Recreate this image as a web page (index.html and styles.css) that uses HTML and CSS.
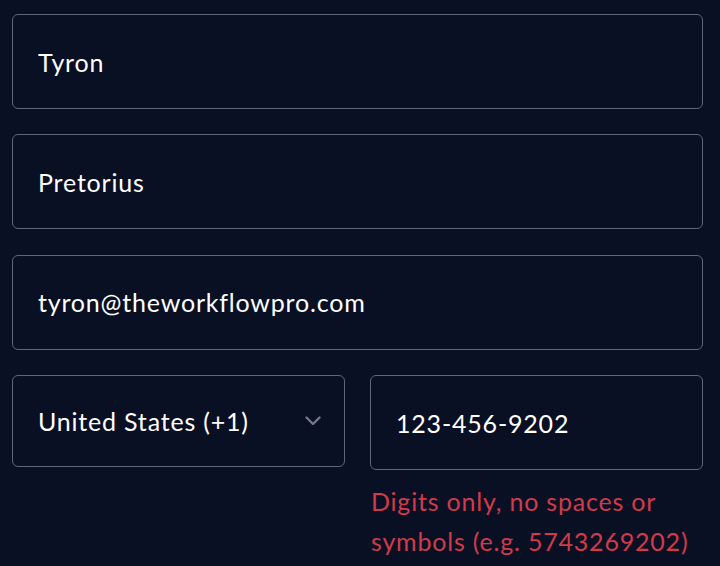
FILE: index.html
```html
<!DOCTYPE html>
<html lang="en">
<head>
<meta charset="utf-8">
<title>Contact form</title>
<link rel="stylesheet" href="styles.css">
</head>
<body>
<form class="form">
  <input class="field" type="text" value="Tyron" aria-label="First name">
  <input class="field" type="text" value="Pretorius" aria-label="Last name">
  <input class="field" type="email" value="tyron@theworkflowpro.com" aria-label="Email">
  <div class="phone-row">
    <div class="select-wrap">
      <select class="field select" aria-label="Country code">
        <option>United States (+1)</option>
      </select>
      <svg class="chevron" width="16" height="10" viewBox="0 0 16 10" aria-hidden="true">
        <path d="M1.5 1.5 L8 8 L14.5 1.5" fill="none" stroke="#737889" stroke-width="2.4" stroke-linecap="round" stroke-linejoin="round"/>
      </svg>
    </div>
    <div class="phone-col">
      <input class="field" type="tel" value="123-456-9202" aria-label="Phone">
      <p class="error">Digits only, no spaces or symbols (e.g. 5743269202)</p>
    </div>
  </div>
</form>
</body>
</html>
```
FILE: styles.css
```css
html, body {
  margin: 0;
  padding: 0;
  background: #0a1023;
}
body {
  font-family: Lato, "Open Sans", sans-serif;
  color: #ffffff;
}
.form {
  display: flex;
  flex-direction: column;
  gap: 25.4px;
  padding: 14px 17px 0 12px;
}
.field {
  display: block;
  box-sizing: border-box;
  width: 100%;
  height: 95px;
  margin: 0;
  padding: 0 25px;
  background: #0a1023;
  border: 1px solid #5f6678;
  border-radius: 6px;
  color: #ffffff;
  font-family: inherit;
  font-size: 25px;
  letter-spacing: 0.8px;
  outline: none;
}
.phone-row {
  display: grid;
  grid-template-columns: 333px 1fr;
  gap: 25px;
  align-items: start;
}
.select-wrap {
  position: relative;
}
.select {
  height: 92px;
  appearance: none;
  -webkit-appearance: none;
}
.chevron {
  position: absolute;
  right: 24px;
  top: 41px;
  pointer-events: none;
}
.error {
  margin: 11px 0 0 1px;
  color: #d23a4b;
  font-size: 25px;
  letter-spacing: 0.8px;
  line-height: 40px;
}
```
